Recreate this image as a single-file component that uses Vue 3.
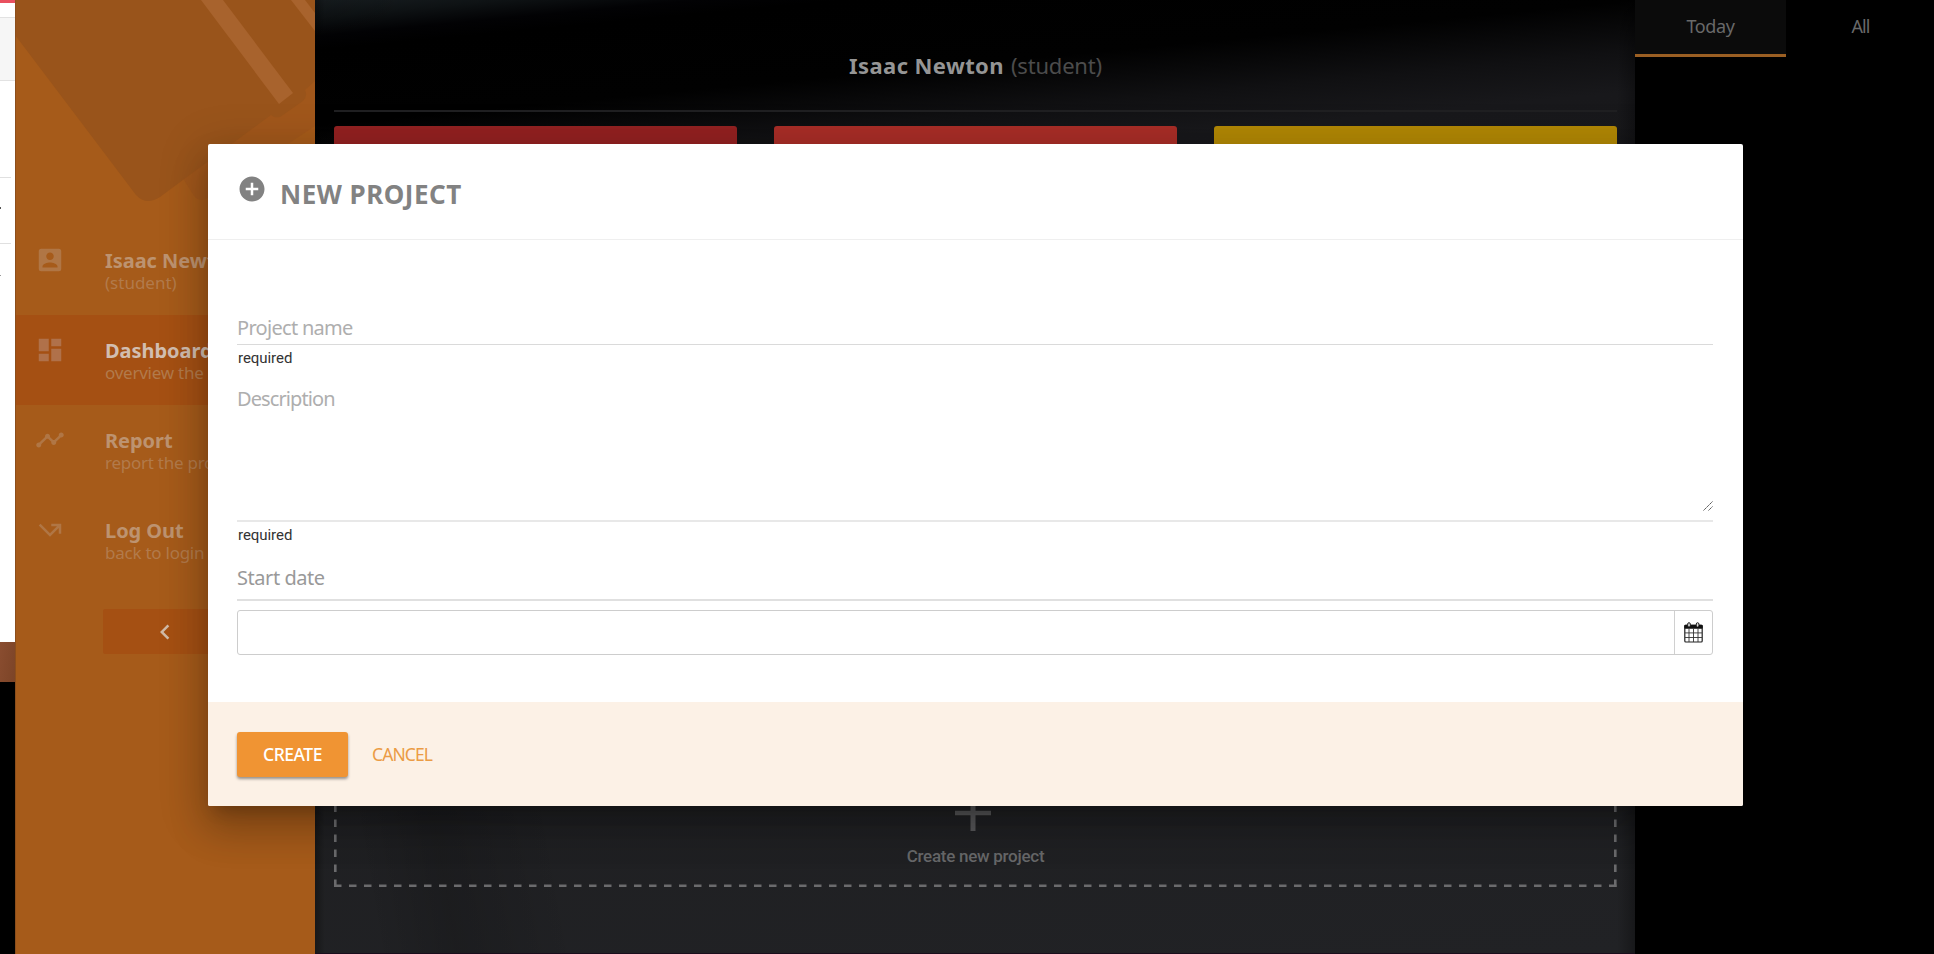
<script setup>
const items = [
  { key: 'user', title: 'Isaac Newton', sub: '(student)', icon: 'M3 5v14a2 2 0 0 0 2 2h14a2 2 0 0 0 2-2V5a2 2 0 0 0-2-2H5a2 2 0 0 0-2 2zm12 4c0 1.66-1.34 3-3 3s-3-1.34-3-3 1.34-3 3-3 3 1.34 3 3zm-9 8c0-2 4-3.1 6-3.1s6 1.1 6 3.1v1H6v-1z' },
  { key: 'dash', title: 'Dashboard', sub: 'overview the', active: true, icon: 'M3 13h8V3H3v10zm0 8h8v-6H3v6zm10 0h8V11h-8v10zm0-18v6h8V3h-8z' },
  { key: 'report', title: 'Report', sub: 'report the projects', icon: 'M23 8c0 1.1-.9 2-2 2-.18 0-.35-.02-.51-.07l-3.56 3.55c.05.16.07.34.07.52 0 1.1-.9 2-2 2s-2-.9-2-2c0-.18.02-.36.07-.52l-2.55-2.55c-.16.05-.34.07-.52.07s-.36-.02-.52-.07l-4.55 4.56c.05.16.07.33.07.51 0 1.1-.9 2-2 2s-2-.9-2-2 .9-2 2-2c.18 0 .35.02.51.07l4.56-4.55C8.02 9.36 8 9.18 8 9c0-1.1.9-2 2-2s2 .9 2 2c0 .18-.02.36-.07.52l2.55 2.55c.16-.05.34-.07.52-.07s.36.02.52.07l3.55-3.56C19.02 8.35 19 8.18 19 8c0-1.1.9-2 2-2s2 .9 2 2z' },
  { key: 'logout', title: 'Log Out', sub: 'back to login', icon: 'M3 8.41l9 9 7-7V15h2V7h-8v2h4.59L12 14.59 4.41 7 3 8.41z' },
]
const cards = ['crimson', 'red', 'amber']
</script>

<template>
  <div class="page">
    <div class="strip">
      <div class="s-red"></div>
      <div class="s-white"></div>
      <div class="s-grey"></div>
      <div class="s-row first"><i></i></div>
      <div class="s-row second"><i></i></div>
      <div class="s-row third"></div>
      <div class="s-brown"></div>
    </div>

    <aside class="side">
      <div class="art">
        <svg width="300" height="225" viewBox="15 0 300 225">
          <path d="M184 180L194 196Q199 202 206 199L315 126V80L184 170Z" fill="#a1571b" />
          <path d="M15 0V35L136 195Q146 206 160 197L271 115Q277 120 283 115L303 101Q308 96 305 90L315 81V0Z" fill="#99541b" />
          <path d="M201 0H223L293 93L279 104Z" fill="#a8632d" />
          <path d="M291 0H305L315 13V31Z" fill="#a8632d" />
        </svg>
      </div>
      <nav>
        <div v-for="it in items" :key="it.key" class="item" :class="[it.key, { active: it.active }]">
          <svg class="ico" width="30" height="30" viewBox="0 0 24 24"><path :d="it.icon" fill="currentColor" /></svg>
          <div class="lbl">
            <b>{{ it.title }}</b>
            <span>{{ it.sub }}</span>
          </div>
        </div>
      </nav>
      <div class="collapse">
        <svg width="30" height="30" viewBox="0 0 24 24"><path d="M15.41 7.41L14 6l-6 6 6 6 1.41-1.41L10.83 12z" fill="#d0bba8" /></svg>
      </div>
    </aside>

    <main class="main">
      <header class="head"><b>Isaac Newton</b><span>(student)</span></header>
      <div class="cards">
        <div v-for="c in cards" :key="c" class="card" :class="c"></div>
      </div>
      <div class="newbox">
        <svg class="dash" width="1283" height="120" viewBox="0 0 1283 120">
          <g stroke="#6b6b6d" stroke-width="2.6" stroke-dasharray="7.5 7.5" fill="none">
            <path d="M0 118.7H1283" />
            <path d="M1.3 120V0" />
            <path d="M1281.3 120V0" />
          </g>
        </svg>
        <div class="newinner">
          <svg width="36" height="36" viewBox="0 0 36 36"><path d="M15.5 0h5v15.7H36v4.6H20.5V36h-5V20.3H0v-4.6h15.5z" fill="#58585a" /></svg>
          <span>Create new project</span>
        </div>
      </div>
    </main>

    <section class="right">
      <div class="tab on"><span>Today</span></div>
      <div class="tab all"><span>All</span></div>
    </section>

    <div class="modal">
      <div class="m-head">
        <svg width="30" height="30" viewBox="0 0 24 24"><path d="M12 2C6.48 2 2 6.48 2 12s4.48 10 10 10 10-4.48 10-10S17.52 2 12 2zm5 11h-4v4h-2v-4H7v-2h4V7h2v4h4v2z" fill="#828282" /></svg>
        <h2>NEW PROJECT</h2>
      </div>
      <div class="m-body">
        <div class="field name"><span>Project name</span></div>
        <small>required</small>
        <div class="field desc">
          <span>Description</span>
          <svg class="grip" width="10" height="10" viewBox="0 0 10 10"><path d="M.5 9.5L9.5 .5M5.5 9.5L9.5 5.5" stroke="#555" stroke-width="1" stroke-dasharray="1.8 .4" /></svg>
        </div>
        <small>required</small>
        <div class="field date"><span>Start date</span></div>
        <div class="input">
          <div class="cal">
            <svg width="19" height="21" viewBox="0 0 19 21">
              <rect x=".8" y="3.3" width="17.4" height="16.7" rx="1" fill="#fff" stroke="#222" stroke-width="1.2" />
              <rect x=".3" y="2.7" width="18.4" height="4" rx="1" fill="#111" />
              <path d="M5 6.5V20M9.5 6.5V20M14 6.5V20M1 10.9H18M1 15.5H18" stroke="#333" stroke-width=".9" />
              <rect x="3.7" y=".7" width="2.6" height="4.4" rx="1.3" fill="#ddd" stroke="#111" stroke-width=".9" />
              <rect x="12.3" y=".7" width="2.6" height="4.4" rx="1.3" fill="#ddd" stroke="#111" stroke-width=".9" />
            </svg>
          </div>
        </div>
      </div>
      <footer class="m-foot">
        <button class="create">CREATE</button>
        <button class="cancel">CANCEL</button>
      </footer>
    </div>
  </div>
</template>

<style>
html, body { background: #000; overflow: hidden; }
</style>

<style scoped>
.page { position: relative; display: grid; grid-template-columns: 15px 300px 1320px 299px; width: 1934px; height: 954px; overflow: hidden; background: #000; font-family: "Noto Sans", sans-serif; }
.page * { box-sizing: border-box; }
svg { display: block; flex: none; }
.strip { display: flex; flex-direction: column; background: #000; overflow: hidden; }
.s-red { height: 3px; background: #e9505f; }
.s-white { height: 15px; background: #fff; border-bottom: 1px solid #e2e2e2; }
.s-grey { height: 63px; background: #f6f6f6; border-bottom: 1px solid #e2e2e2; }
.s-row { background: #fff; }
.s-row i { display: block; width: 11px; height: 1px; background: #e0e0e0; }
.first { height: 128px; padding-top: 96px; }
.second { height: 67px; padding-top: 34px; }
.third { height: 366px; }
.first::after, .second::after { content: ""; display: block; width: 1px; height: 2px; background: #555; }
.first::after { margin-top: 29px; }
.second::after { margin-top: 31px; background: #999; }
.s-brown { height: 40px; background: linear-gradient(100deg, #8a4d30, #7c4427); }

.side { background: #a65b1a; border-left: 1px solid #8b4e1c; overflow: hidden; }
.art { height: 225px; margin-left: -1px; }
.item { display: flex; height: 90px; padding: 20px 0 0 19px; color: #b07645; white-space: nowrap; }
.item.active { background: #a55013; color: #b0714a; }
.lbl { display: flex; flex-direction: column; margin: 5px 0 0 40px; }
.lbl b { font-size: 20px; line-height: 22px; letter-spacing: -.05px; color: #bd9370; }
.active .lbl b { color: #d2beb0; }
.lbl span { font-size: 17px; line-height: 22px; letter-spacing: -.25px; color: #b27a4b; }
.user .lbl span { letter-spacing: 0; }
.collapse { display: flex; align-items: center; justify-content: center; width: 125px; height: 45px; margin: 24px 0 0 87px; padding-right: 1px; border-radius: 2px; background: #a55013; }

.main { display: flex; flex-direction: column; padding: 0 18px 67px 19px;
  background: linear-gradient(90deg, rgba(0,0,0,.3), transparent 10px, transparent 1302px, rgba(0,0,0,.3) 1320px),
    linear-gradient(80deg, transparent 60px, rgba(0,0,0,.14) 140px, transparent 260px),
    linear-gradient(174.6deg, #171d20 0, #0e1214 18px, #020204 36px, #000 50px, #010101 125px, #101012 175px, #18181b 215px, #1e1e20 600px, #212225 100%); border-bottom: 1px solid #1a0d1c; }
.head { display: flex; justify-content: center; height: 112px; padding-top: 50px; border-bottom: 2px solid #202022; font-size: 22px; line-height: 30px; white-space: nowrap; gap: 7px; }
.head b { color: #959595; letter-spacing: .4px; }
.head span { color: #4c4c4c; letter-spacing: -.2px; }
.cards { display: grid; grid-template-columns: repeat(3, 402.5px); gap: 37.5px; margin-top: 14px; }
.card { height: 400px; border-radius: 3px 3px 0 0; }
.crimson { background: #932121; }
.red { background: #a82d27; }
.amber { background: #b18705; }
.newbox { height: 120px; margin-top: auto; margin-bottom: -1px; display: grid; }
.newbox > * { grid-area: 1 / 1; }
.newinner { display: flex; flex-direction: column; align-items: center; padding-top: 28px; }
.newinner svg { margin-right: 5px; }
.newinner span { margin-top: 14px; font: 500 17px/22px Roboto, sans-serif; letter-spacing: -.27px; color: #67686a; white-space: nowrap; }

.right { display: grid; grid-template-columns: 151px 149px; background: #000; align-items: start; }
.tab { height: 57px; padding-top: 14px; text-align: center; font-size: 18px; line-height: 24px; letter-spacing: -.4px; color: #696969; }
.tab.on { background: #0b0b0b; border-bottom: 3px solid #9b5f23; }
.tab.all { letter-spacing: -1px; }

.modal { position: absolute; left: 208px; top: 144px; width: 1535px; height: 662px; display: flex; flex-direction: column; background: #fff; border-radius: 2px; box-shadow: 0 11px 15px -7px rgba(0,0,0,.2), 0 24px 38px 3px rgba(0,0,0,.16), 0 9px 46px 8px rgba(0,0,0,.14); }
.m-head { display: flex; height: 96px; padding: 30px 29px 0; border-bottom: 1px solid #efefef; }
.m-head h2 { margin: 5px 0 0 13px; font-size: 26px; line-height: 30px; letter-spacing: .5px; color: #828282; }
.m-body { flex: 1; display: flex; flex-direction: column; padding: 72px 30px 0 29px; }
.field { display: flex; font-size: 20px; line-height: 28px; letter-spacing: -.7px; color: #aeaeae; border-bottom: 2px solid #e8e8e8; white-space: nowrap; }
.name { height: 33px; padding-top: 2px; border-bottom: 1px solid #dadada; }
.desc { height: 155px; padding-top: 18px; letter-spacing: -.9px; justify-content: space-between; align-items: flex-start; }
.grip { margin-top: 116px; }
.date { height: 57px; padding-top: 20px; letter-spacing: -.45px; color: #999; border-color: #e0e0e0; }
.m-body small { height: 22px; padding-left: 1px; font: 15px/27px Roboto, sans-serif; letter-spacing: -.05px; color: #333; }
.input { display: flex; justify-content: flex-end; height: 45px; margin-top: 9px; border: 1px solid #cdcdcd; border-radius: 3px; }
.cal { display: flex; align-items: center; justify-content: center; width: 38px; border-left: 1px solid #d0d0d0; }
.m-foot { display: flex; height: 104px; padding: 30px 29px; background: #fcf1e6; border-radius: 0 0 2px 2px; }
button { border: 0; padding: 0; background: none; font: 17px/43px "Noto Sans", sans-serif; height: 45px; white-space: nowrap; }
.create { width: 111px; border-radius: 3px; background: #f09433; color: #fff; font-size: 17.5px; font-weight: 500; letter-spacing: -.45px; box-shadow: 0 2px 3px rgba(0,0,0,.4); }
.cancel { margin-left: 24px; color: #eb9c45; font-size: 17.5px; letter-spacing: -.9px; }
</style>
